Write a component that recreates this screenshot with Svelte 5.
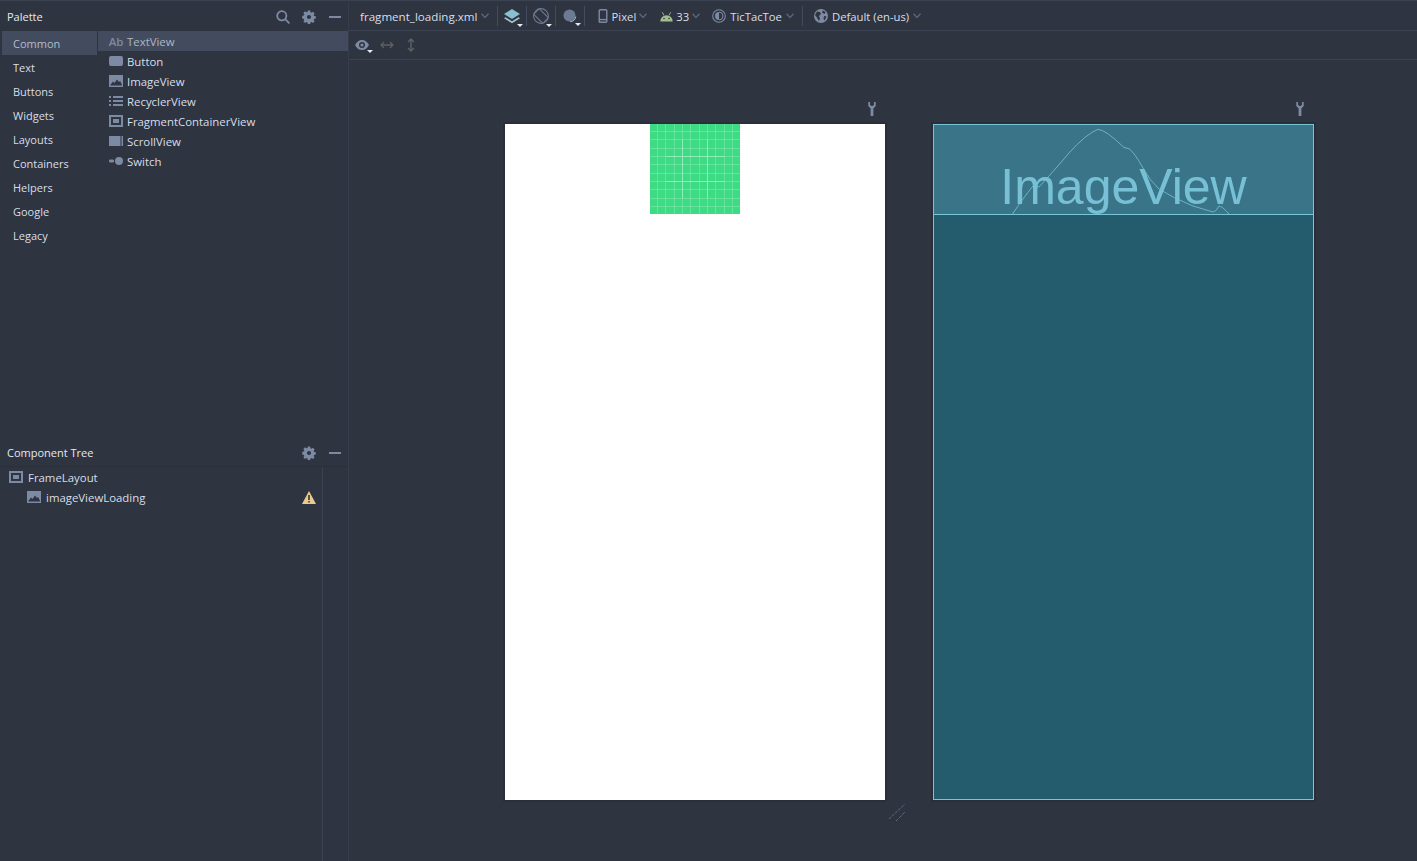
<script lang="ts">
	const categories = ['Common', 'Text', 'Buttons', 'Widgets', 'Layouts', 'Containers', 'Helpers', 'Google', 'Legacy'];
	const widgets = [
		{ name: 'TextView', icon: 'ab' },
		{ name: 'Button', icon: 'button' },
		{ name: 'ImageView', icon: 'image' },
		{ name: 'RecyclerView', icon: 'list' },
		{ name: 'FragmentContainerView', icon: 'frame' },
		{ name: 'ScrollView', icon: 'scroll' },
		{ name: 'Switch', icon: 'switch' }
	];
	const gridStops = [9, 19, 29, 39, 49, 59, 69, 79, 89, 99];
</script>

{#snippet chevron()}
	<svg class="chev" width="8" height="6" viewBox="0 0 8 6" fill="none" stroke="#5b657a" stroke-width="1.4"><path d="M.5.8L4 4.4 7.500.8" /></svg>
{/snippet}

{#snippet gear()}
	<svg width="14" height="14" viewBox="0 0 14 14" fill="#7d8aa3"><path fill-rule="evenodd" d="M5.800.6h2.400l.3 1.700 1 .45 1.450-1 1.700 1.700-1 1.450.45 1 1.700.3v2.400l-1.700.3-.45 1 1 1.450-1.700 1.700-1.450-1-1 .45-.3 1.700H5.800l-.3-1.700-1-.45-1.450 1-1.700-1.700 1-1.450-.45-1-1.700-.3V5.800l1.700-.3.45-1-1-1.450 1.700-1.700 1.450 1 1-.45zM7 4.900a2.100 2.100 0 100 4.200 2.100 2.100 0 000-4.200z" /></svg>
{/snippet}

{#snippet minus()}
	<svg class="minus" width="12" height="14" viewBox="0 0 12 14" fill="#7d8aa3"><rect y="6" width="12" height="2" /></svg>
{/snippet}

{#snippet corner()}
	<span class="corner"></span>
{/snippet}

{#snippet wrench()}
	<svg class="wrench" width="8" height="14" viewBox="0 0 8 14" fill="#7d8aa3"><path d="M.3 0v4l2.300 2.500V14h2.800V6.500L7.700 4V0H6v2.800L4.700 4H3.300L2 2.800V0z" /></svg>
{/snippet}

{#snippet widgetIcon(kind: string)}
	{#if kind === 'ab'}
		<span class="ab">Ab</span>
	{:else}
		<svg width="14" height="14" viewBox="0 0 14 14" fill="#7d8aa3">
			{#if kind === 'button'}
				<rect x="0" y="2" width="14" height="10" rx="2" />
			{:else if kind === 'image'}
				<rect y="1" width="14" height="12" />
				<path d="M1 11.500l3-4 1.500 1.500L8 5.500l2 2.500 1.200-1 2 4.500z" fill="#2e3440" />
			{:else if kind === 'list'}
				<path d="M0 2h2v2H0zM4 2h10v2H4zM0 6h2v2H0zM4 6h10v2H4zM0 10h2v2H0zM4 10h10v2H4z" />
			{:else if kind === 'frame'}
				<path fill-rule="evenodd" d="M0 1h14v12H0zM2 3v8h10V3zM4 5h6v4H4z" />
			{:else if kind === 'scroll'}
				<path d="M0 2h11.500v10H0zM12.500 2H14v10h-1.500z" />
			{:else if kind === 'switch'}
				<circle cx="10" cy="7" r="4" />
				<rect x="0" y="5.400" width="5" height="3.200" rx="1.400" />
			{/if}
		</svg>
	{/if}
{/snippet}

<div class="app">
	<aside class="left">
		<section class="palette">
			<header class="panel-head">
				<span class="panel-title">Palette</span>
				<div class="panel-tools">
					<svg width="14" height="14" viewBox="0 0 14 14" fill="none" stroke="#7d8aa3" stroke-width="1.800"><circle cx="5.800" cy="5.800" r="4.600" /><path d="M9.200 9.200l4.200 4.200" /></svg>
					{@render gear()}
					{@render minus()}
				</div>
			</header>
			<div class="palette-body">
				<ul class="cats">
					{#each categories as cat, i}
						<li class:sel={i === 0}>{cat}</li>
					{/each}
				</ul>
				<ul class="widgets">
					{#each widgets as w, i}
						<li class:sel={i === 0}>
							<span class="icon-box">{@render widgetIcon(w.icon)}</span>
							<span class:dim={i === 0}>{w.name}</span>
						</li>
					{/each}
				</ul>
			</div>
		</section>
		<section class="tree">
			<header class="panel-head tree-head">
				<span class="panel-title">Component Tree</span>
				<div class="panel-tools">
					{@render gear()}
					{@render minus()}
				</div>
			</header>
			<div class="tree-body">
				<div class="tree-rows">
					<div class="tree-row">
						{@render widgetIcon('frame')}
						<span>FrameLayout</span>
					</div>
					<div class="tree-row child">
						{@render widgetIcon('image')}
						<span>imageViewLoading</span>
						<svg class="warn" width="14" height="13" viewBox="0 0 14 13"><path d="M7 0l7 13H0z" fill="#ebcb8b" /><path d="M6.200 4h1.600v5H6.200zM6.200 10h1.600v1.600H6.200z" fill="#2e3440" /></svg>
					</div>
				</div>
			</div>
		</section>
	</aside>

	<main class="right">
		<div class="toolbar">
			<span class="tb-item file">fragment_loading.xml {@render chevron()}</span>
			<i class="sep first"></i>
			<span class="tb-btn">
				<svg width="16" height="16" viewBox="0 0 16 16"><path d="M8 1l8 5-8 5-8-5z" fill="#88c0d0" /><path d="M1.500 9.200L0 10.300l8 5 8-5-1.500-1.100L8 13.200z" fill="#a9c4cf" /></svg>
				{@render corner()}
			</span>
			<i class="sep"></i>
			<span class="tb-btn">
				<svg width="16" height="16" viewBox="0 0 16 16" fill="none" stroke="#6c7a92" stroke-width="1.100"><circle cx="8" cy="8" r="7.400" /><rect x="4" y="1.500" width="8" height="13" rx="1" transform="rotate(-45 8 8)" fill="#2e3440" /></svg>
				{@render corner()}
			</span>
			<i class="sep"></i>
			<span class="tb-btn">
				<svg width="14" height="14" viewBox="0 0 14 14"><circle cx="6.500" cy="6.500" r="6" fill="#6c7a92" /><path d="M12.800 7.500a6.200 6.200 0 01-5.600 5.300" fill="none" stroke="#aab4c4" stroke-width="1" /></svg>
				{@render corner()}
			</span>
			<i class="sep"></i>
			<span class="tb-item device">
				<svg width="10" height="14" viewBox="0 0 10 14" fill="none" stroke="#7d8aa3" stroke-width="1.400"><rect x="1.200" y=".8" width="7.600" height="12.400" rx="1" /><path d="M1 10.600h8" /></svg>
				Pixel {@render chevron()}
			</span>
			<span class="tb-item api">
				<svg width="13" height="11" viewBox="0 0 13 11"><path d="M.3 10.500a6.200 6.200 0 0112.400 0zM2.600 1l1.700 3-.7.4L2 1.400zM10.400 1L8.700 4l.7.4L11 1.400z" fill="#a3be8c" /><circle cx="4" cy="7.500" r=".8" fill="#2e3440" /><circle cx="9" cy="7.500" r=".8" fill="#2e3440" /></svg>
				33 {@render chevron()}
			</span>
			<span class="tb-item theme">
				<svg width="14" height="14" viewBox="0 0 14 14"><circle cx="7" cy="7" r="6.300" fill="none" stroke="#7d8aa3" stroke-width="1.100" /><path d="M7 3a4 4 0 000 8z" fill="#7d8aa3" /><path d="M7 3a4 4 0 010 8" fill="none" stroke="#7d8aa3" /></svg>
				TicTacToe {@render chevron()}
			</span>
			<i class="sep after-theme"></i>
			<span class="tb-item locale">
				<svg width="14" height="14" viewBox="0 0 14 14"><circle cx="7" cy="7" r="7" fill="#7d8aa3" /><path d="M3 2.500l3 .5 1 2-2 2 1 2.500-1 2.500L2.500 8 1 6zM9 1.500l2.500 1.500-1 2-2.500-1.500zM10 7l2.500.5-2 4-1-2z" fill="#2e3440" /></svg>
				Default (en-us) {@render chevron()}
			</span>
		</div>
		<div class="subbar">
			<span class="tb-btn eye">
				<svg width="14" height="10" viewBox="0 0 14 10"><path fill-rule="evenodd" d="M0 5c1.500-3 4-5 7-5s5.500 2 7 5c-1.500 3-4 5-7 5S1.500 8 0 5zm7-3a3 3 0 100 6 3 3 0 000-6z" fill="#7d8aa3" /><circle cx="7" cy="5" r="1.600" fill="#7d8aa3" /></svg>
				{@render corner()}
			</span>
			<svg class="arrow-h" width="14" height="8" viewBox="0 0 14 8" fill="none" stroke="#5f5f5f" stroke-width="1.300"><path d="M1 4h12M4 1L1 4l3 3M10 1l3 3-3 3" /></svg>
			<svg class="arrow-v" width="8" height="14" viewBox="0 0 8 14" fill="none" stroke="#5f5f5f" stroke-width="1.500"><path d="M4 1v12M1 4l3-3 3 3M1 10l3 3 3-3" /></svg>
		</div>

		<div class="canvas">
			<div class="device-wrap">
				{@render wrench()}
				<div class="screen design">
					<svg class="launcher" width="90" height="90" viewBox="0 0 108 108">
						<rect width="108" height="108" fill="#3ddc84" />
						{#each gridStops as s}
							<path d="M{s} 0V108M0 {s}H108" stroke="#fff" stroke-opacity=".2" stroke-width="1.200" fill="none" />
						{/each}
						<path d="M19 39H89M19 69H89M39 19V89M69 19V89" stroke="#fff" stroke-opacity=".3" stroke-width="1.200" fill="none" />
					</svg>
				</div>
				<svg class="resize" width="20" height="20" viewBox="0 0 20 20" fill="none" stroke="#7b8496" stroke-dasharray="1 1"><path d="M1 16L17 1M8 18L17 9" /></svg>
			</div>
			<div class="device-wrap">
				{@render wrench()}
				<div class="screen blueprint">
					<div class="bp-image">
						<svg class="mountain" width="380" height="90" viewBox="0 0 380 90" fill="none" stroke="#6cb3c7" stroke-width="1"><path d="M78.500 89Q84 81 89 74T99 61L105 62 115 51Q125 40 135 28 152 9 164 4.300 172 5 190 22.500L195 23.700Q200 27 209 43 216 56 225 64 239 73 259 81L279 87Q282 87 285 81 288 81 295 89" /></svg>
						<span class="bp-label">ImageView</span>
					</div>
				</div>
			</div>
		</div>
	</main>
</div>

<style>
	:global(body) {
		margin: 0;
		background: #2e3440;
	}

	.app {
		display: grid;
		grid-template-columns: 349px 1fr;
		height: 861px;
		overflow: hidden;
		background: #2e3440;
		color: #d8dee9;
		font-family: 'Open Sans', 'Noto Sans', sans-serif;
		font-size: 11.4px;
		box-sizing: border-box;
		border-top: 1px solid #3b4252;
		padding-top: 1px;
	}

	ul {
		list-style: none;
		margin: 0;
		padding: 0;
	}

	.left {
		display: flex;
		flex-direction: column;
		border-right: 1px solid #373d4a;
	}

	.palette {
		height: 437px;
		flex-shrink: 0;
	}

	.panel-head {
		display: flex;
		align-items: center;
		justify-content: space-between;
		height: 29px;
		padding: 0 7px;
	}

	.panel-title {
		font-size: 11px;
		color: #e5e9f0;
	}

	.panel-tools {
		display: flex;
		align-items: center;
		gap: 12px;
	}

	.minus {
		margin-left: 1px;
	}

	.palette-body {
		display: flex;
	}

	.cats {
		width: 95px;
		margin-left: 2px;
		flex-shrink: 0;
	}

	.cats li {
		height: 24px;
		line-height: 26px;
		padding-left: 11px;
		font-size: 11px;
		color: #d8dee9;
	}

	.cats li.sel {
		background: #434c5e;
		color: #b4bccb;
	}

	.widgets {
		flex: 1;
		margin-left: 1px;
	}

	.widgets li {
		display: flex;
		align-items: center;
		height: 20px;
		padding-left: 11px;
		gap: 4px;
	}

	.widgets li.sel {
		background: #434c5e;
	}

	.dim {
		color: #aeb6c6;
	}

	.icon-box {
		display: flex;
		width: 14px;
		justify-content: center;
	}

	.ab {
		font-size: 11.5px;
		font-weight: 600;
		color: #7d8aa3;
	}

	.tree {
		flex: 1;
		display: flex;
		flex-direction: column;
	}

	.tree-head {
		height: 27px;
		border-bottom: 1px solid #2a2f3a;
		box-sizing: content-box;
	}

	.tree-body {
		flex: 1;
		margin-right: 25px;
		border-right: 1px solid #3b4252;
	}

	.tree-row {
		display: flex;
		align-items: center;
		gap: 5px;
		height: 20px;
		padding-left: 9px;
	}

	.tree-row.child {
		padding-left: 27px;
	}

	.warn {
		margin-left: auto;
		margin-right: 6px;
	}

	.right {
		display: flex;
		flex-direction: column;
		min-width: 0;
	}

	.toolbar {
		display: flex;
		align-items: center;
		height: 28px;
		border-bottom: 1px solid #3b4252;
		padding-left: 11px;
		flex-shrink: 0;
		font-size: 11.3px;
	}

	.tb-item {
		display: inline-flex;
		align-items: center;
		gap: 4px;
		white-space: nowrap;
	}

	.file {
		font-size: 11.6px;
	}

	.sep {
		width: 1px;
		height: 20px;
		background: #434c5e;
	}

	.sep.first {
		margin-left: 8px;
	}

	.sep.after-theme {
		margin-left: 8px;
	}

	.tb-btn {
		position: relative;
		display: inline-flex;
		align-items: center;
		justify-content: center;
		width: 16px;
		margin: 0 6px;
	}

	.corner {
		position: absolute;
		right: -3px;
		bottom: -3px;
		width: 0;
		height: 0;
		border-left: 3px solid transparent;
		border-right: 3px solid transparent;
		border-top: 3px solid #e5e9f0;
	}

	.device {
		margin-left: 13px;
		gap: 3px;
	}

	.api {
		margin-left: 13px;
		gap: 3px;
	}

	.theme {
		margin-left: 12px;
	}

	.locale {
		margin-left: 11px;
	}

	.subbar {
		display: flex;
		align-items: center;
		gap: 10px;
		height: 28px;
		border-bottom: 1px solid #3b4252;
		padding-left: 2px;
		flex-shrink: 0;
	}

	.eye {
		margin: 0 0 0 3px;
	}

	.arrow-v {
		margin-left: 3px;
	}

	.canvas {
		display: flex;
		gap: 47px;
		padding: 42px 0 0 156px;
	}

	.device-wrap {
		position: relative;
		display: flex;
		flex-direction: column;
		align-items: flex-end;
		width: 381px;
	}

	.wrench {
		flex-shrink: 0;
		margin: 0 10px 8px 0;
	}

	.screen {
		width: 100%;
		height: 676px;
		box-sizing: border-box;
		box-shadow: 0 0 0 2px #292e39;
	}

	.design {
		background: #fff;
		display: flex;
		justify-content: center;
		width: 380px;
		margin-right: 1px;
	}

	.launcher {
		display: block;
		shape-rendering: crispEdges;
	}

	.resize {
		position: absolute;
		left: 383px;
		bottom: -23px;
	}

	.blueprint {
		background: #245c6e;
		border: 1px solid #79c5d8;
	}

	.bp-image {
		position: relative;
		height: 90px;
		box-sizing: border-box;
		overflow: hidden;
		background: #3a7488;
		border-bottom: 1px solid #79c5d8;
		display: flex;
		align-items: center;
		justify-content: center;
	}

	.mountain {
		position: absolute;
		left: 0;
		top: 0;
	}

	.bp-label {
		position: relative;
		font-family: 'Liberation Sans', Arial, sans-serif;
		font-size: 50px;
		line-height: 1;
		color: #78c0d5;
		margin-top: 34px;
		white-space: nowrap;
	}
</style>
